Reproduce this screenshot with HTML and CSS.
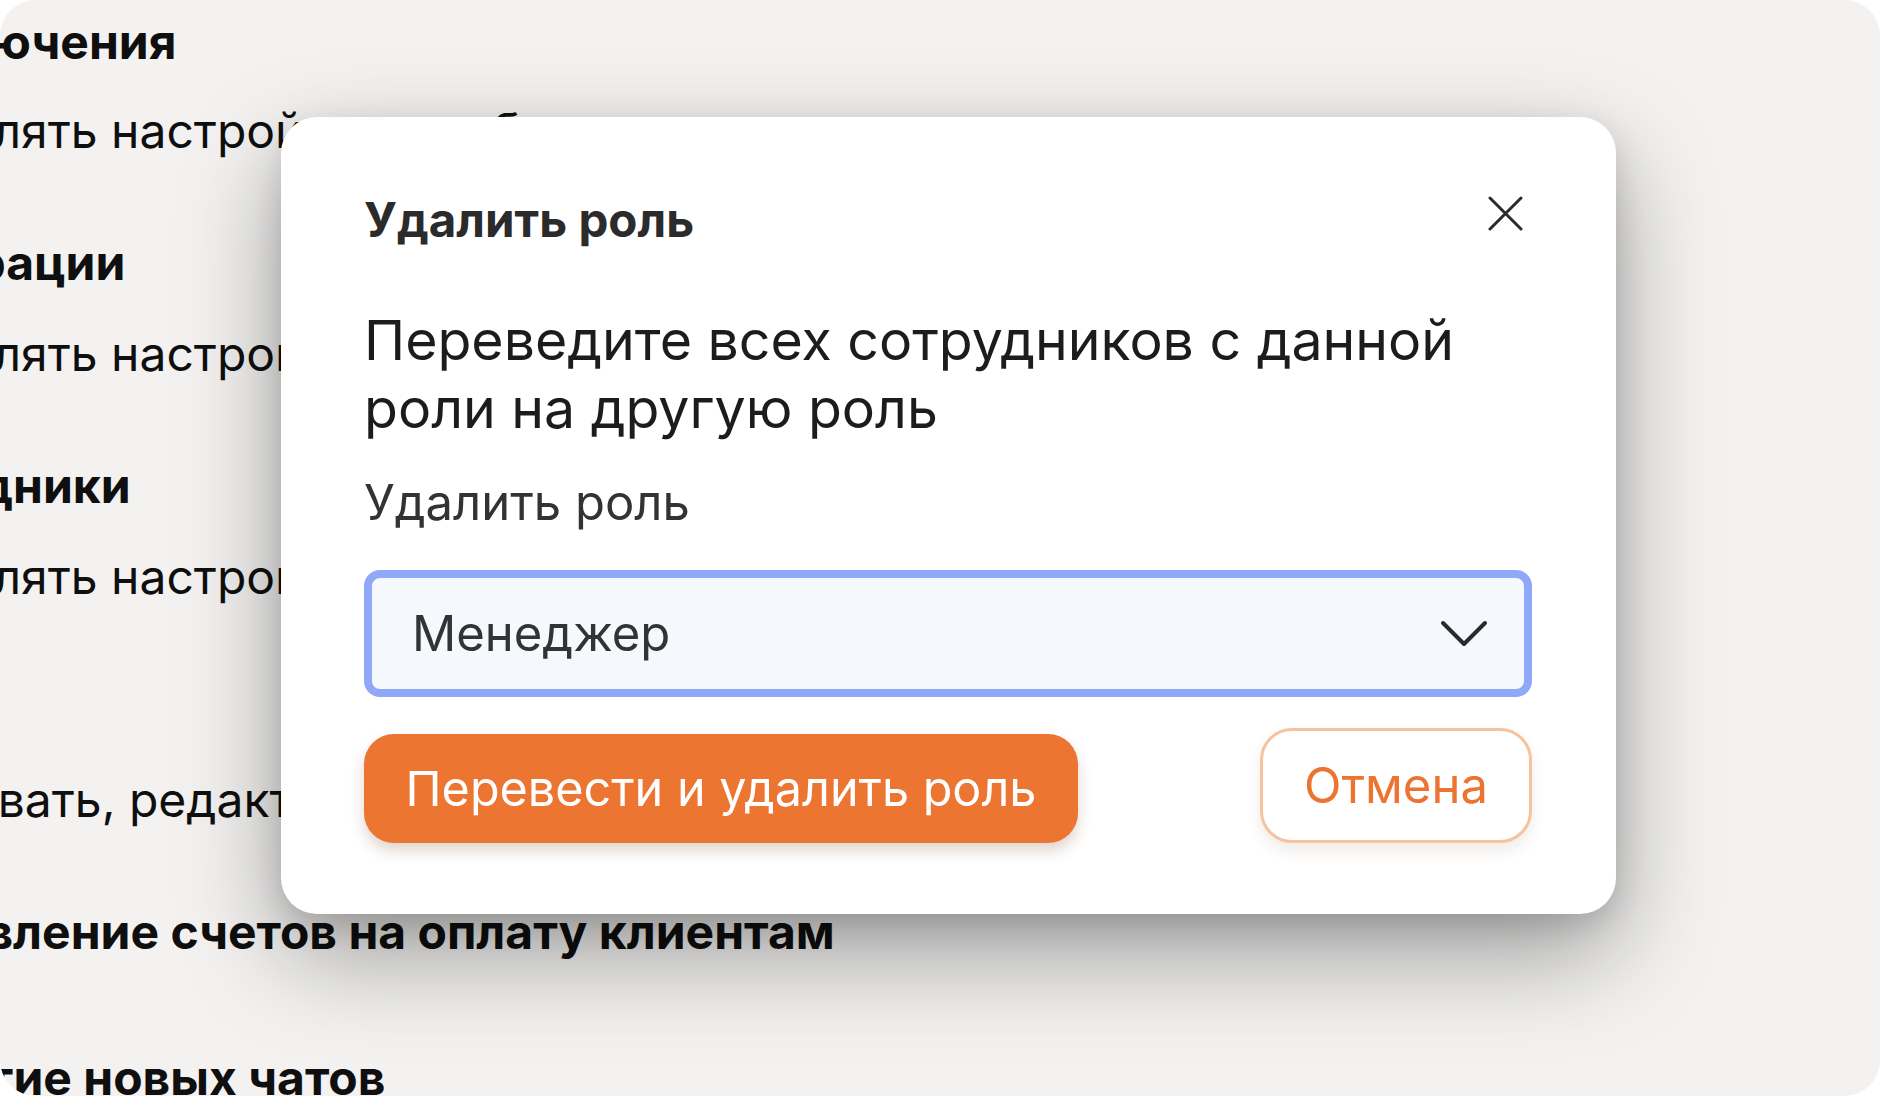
FILE: index.html
```html
<!DOCTYPE html>
<html lang="ru">
<head>
<meta charset="utf-8">
<title>Удалить роль</title>
<link rel="stylesheet" href="styles.css">
</head>
<body>
<div class="screen">
  <div class="settings">
    <div class="row head r1">Подключения</div>
    <div class="row desc r2">Управлять настройками работы</div>
    <div class="row head r3">Интеграции</div>
    <div class="row desc r4">Управлять настройками интеграций</div>
    <div class="row head r3">Сотрудники</div>
    <div class="row desc r4">Управлять настройками сотрудников</div>
    <div class="row head r3">Чаты</div>
    <div class="row desc r4">Создавать, редактировать и удалять чаты</div>
    <div class="row head r3">Выставление счетов на оплату клиентам</div>
    <div class="row head r9">Принятие новых чатов</div>
  </div>

  <div class="modal">
    <div class="modal-head">
      <h2 class="modal-title">Удалить роль</h2>
      <svg class="close" width="35" height="35" viewBox="0 0 35 35">
        <path d="M2 2 L33 33 M33 2 L2 33" stroke="#2a2a2a" stroke-width="3" stroke-linecap="round" fill="none"/>
      </svg>
    </div>
    <p class="modal-text">Переведите всех сотрудников с данной роли на другую роль</p>
    <div class="field-label">Удалить роль</div>
    <div class="select">
      <span class="select-value">Менеджер</span>
      <svg class="chevron" width="48" height="28" viewBox="0 0 48 28">
        <path d="M3 3 L24 24 L45 3" stroke="#2a2a2a" stroke-width="4" stroke-linecap="round" stroke-linejoin="round" fill="none"/>
      </svg>
    </div>
    <div class="actions">
      <button class="btn btn-primary">Перевести и удалить роль</button>
      <button class="btn btn-secondary">Отмена</button>
    </div>
  </div>
</div>
</body>
</html>
```

FILE: styles.css
```css
* { box-sizing: border-box; }

html, body {
  margin: 0;
  padding: 0;
  background: #ffffff;
}

body {
  font-family: "Inter", "Noto Sans", sans-serif;
  width: 1880px;
  height: 1096px;
  overflow: hidden;
}

.screen {
  position: relative;
  width: 1880px;
  height: 1096px;
  border-radius: 36px;
  background: #f3f2f1;
  overflow: hidden;
}

.settings {
  display: flex;
  flex-direction: column;
  margin-left: -165px;
  color: #0f0f0f;
  font-size: 48px;
  line-height: 60px;
  white-space: nowrap;
}

.row.head { font-weight: 700; }
.row.desc { font-weight: 400; padding-left: 18px; }

.r1 { margin-top: 12px; }
.r2 { margin-top: 29px; }
.r3 { margin-top: 72px; }
.r4 { margin-top: 31px; }
.r9 { margin-top: 86px; }

.modal {
  position: absolute;
  left: 281px;
  top: 117px;
  width: 1335px;
  background: #ffffff;
  border-radius: 36px;
  padding: 74px 84px 71px 83px;
  box-shadow: 0 40px 100px rgba(0, 0, 0, 0.36), 0 10px 30px rgba(0, 0, 0, 0.12);
}

.modal-head {
  display: flex;
  justify-content: space-between;
  align-items: flex-start;
}

.modal-title {
  margin: 0;
  font-size: 47.5px;
  line-height: 57px;
  font-weight: 700;
  color: #2b2b2b;
}

.close {
  margin-top: 5px;
  margin-right: 9px;
  display: block;
}

.modal-text {
  margin: 58px 0 0;
  font-size: 55.4px;
  line-height: 68px;
  font-weight: 400;
  color: #1c1c1c;
  max-width: 1130px;
}

.field-label {
  margin-top: 31px;
  font-size: 49px;
  line-height: 60px;
  color: #333333;
}

.select {
  margin-top: 37px;
  height: 127px;
  border: 8px solid #8fa8f7;
  border-radius: 16px;
  background: #f5f8fd;
  display: flex;
  align-items: center;
  justify-content: space-between;
  padding: 0 36px 0 40px;
}

.select-value {
  font-size: 49px;
  color: #333333;
}

.chevron { display: block; }

.actions {
  margin-top: 31px;
  display: flex;
  justify-content: space-between;
  align-items: flex-end;
}

.btn {
  font-family: "Inter", "Noto Sans", sans-serif;
  font-weight: 400;
  cursor: pointer;
}

.btn-primary {
  width: 714px;
  height: 109px;
  border: none;
  border-radius: 30px;
  background: #ec7531;
  color: #ffffff;
  font-size: 48.5px;
  box-shadow: 0 8px 14px rgba(120, 70, 30, 0.22);
}

.btn-secondary {
  width: 272px;
  height: 115px;
  border: 3px solid #f6c39e;
  border-radius: 32px;
  background: #ffffff;
  color: #ec7330;
  font-size: 49px;
  box-shadow: 0 8px 14px rgba(120, 70, 30, 0.10);
}
```
